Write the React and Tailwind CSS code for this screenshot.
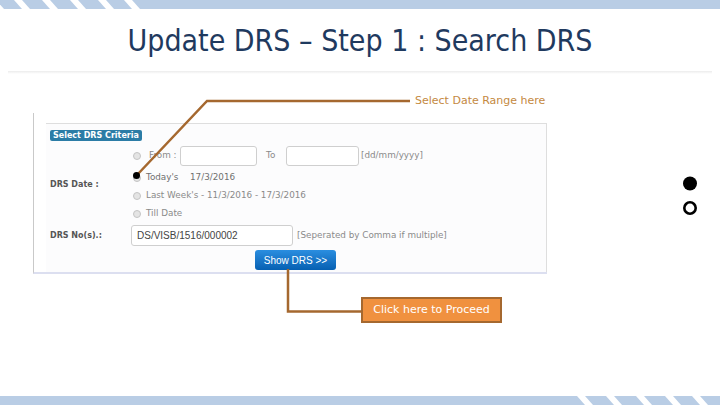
import React from "react";

const Stripes = ({ tops, fill }) => (
  <svg width="720" height="9" viewBox="0 0 720 9" className="block">
    <rect x="0" y="0" width="720" height="9" fill={fill} />
    {tops.map((x) => (
      <polygon key={x} points={`${x},0 ${x + 8},0 ${x + 16},9 ${x + 8},9`} fill="#ffffff" />
    ))}
  </svg>
);

const Radio = () => (
  <span className="inline-block w-[8px] h-[8px] rounded-full border border-[#c4c4c4] bg-[#e4e4e4] shrink-0" />
);

export default function App() {
  const small = { fontFamily: '"DejaVu Sans", Verdana, sans-serif' };
  return (
    <div className="relative w-[720px] h-[405px] bg-white overflow-hidden flex flex-col">
      <Stripes tops={[-12, 14, 42, 70, 98, 124]} fill="#b9cde5" />
      <div
        className="h-[62px] flex items-center justify-center text-[30px] text-[#1f3a5f]"
        style={{ fontFamily: '"DejaVu Sans Condensed", "DejaVu Sans", sans-serif', fontStretch: "condensed" }}
      >
        Update DRS – Step 1 : Search DRS
      </div>
      <div className="mx-[8px] h-[3px] bg-gradient-to-b from-[#ececec] to-white" />

      <div className="flex-1 flex flex-col">
        <div className="ml-[33px] mt-[39px] w-[514px] h-[161px] flex flex-col border-l border-l-[#c9c9c9] border-b-2 border-b-[#dcdff0]">
          <div className="ml-[12px] mt-[10px] flex-1 border-t border-r border-[#dedede] bg-[#fcfcfd] pl-[4px] pt-[6px] flex flex-col" style={small}>
            <div className="self-start h-[11px] px-[3px] rounded-[2px] bg-[#2b7ca6] text-white text-[8px] font-bold leading-[11px]">
              Select DRS Criteria
            </div>

            <div className="mt-[5px] flex">
              <div className="w-[83px] flex items-center text-[8px] font-bold text-[#555]">DRS Date :</div>
              <div className="flex flex-col text-[8.8px] text-[#8a8a8a]">
                <div className="h-[20px] flex items-center">
                  <Radio />
                  <span className="ml-[8px] w-[31px]">From :</span>
                  <span className="w-[77px] h-[20px] border border-[#cfcfcf] rounded-[3px] bg-white" />
                  <span className="ml-[9px] w-[20px]">To</span>
                  <span className="w-[73px] h-[20px] border border-[#cfcfcf] rounded-[3px] bg-white" />
                  <span className="ml-[2px]">[dd/mm/yyyy]</span>
                </div>
                <div className="mt-[3px] h-[18px] flex items-center text-[#707070]">
                  <Radio />
                  <span className="ml-[5px] w-[44px]">Today's</span>
                  <span>17/3/2016</span>
                </div>
                <div className="h-[18px] flex items-center">
                  <Radio />
                  <span className="ml-[5px]">Last Week's - 11/3/2016 - 17/3/2016</span>
                </div>
                <div className="h-[18px] flex items-center">
                  <Radio />
                  <span className="ml-[5px]">Till Date</span>
                </div>
              </div>
            </div>

            <div className="mt-[2px] flex items-center">
              <div className="w-[83px] text-[8px] font-bold text-[#555]">DRS No(s).:</div>
              <div
                className="ml-[-2px] w-[162px] h-[21px] border border-[#cfcfcf] rounded-[3px] bg-white pl-[5px] flex items-center text-[10px] text-[#444]"
                style={{ fontFamily: '"Liberation Sans", Arial, sans-serif' }}
              >
                DS/VISB/1516/000002
              </div>
              <span className="ml-[4px] text-[8.8px] text-[#8a8a8a]">[Seperated by Comma if multiple]</span>
            </div>

            <div className="mt-[4px] flex">
              <div
                className="ml-[205px] w-[81px] h-[20px] rounded-[3px] bg-gradient-to-b from-[#2a8ee0] to-[#0560b2] text-white text-[10px] flex items-center justify-center"
                style={{ fontFamily: '"Liberation Sans", Arial, sans-serif' }}
              >
                Show DRS &gt;&gt;
              </div>
            </div>
          </div>
        </div>
      </div>

      <Stripes tops={[577, 606, 636, 665, 692]} fill="#b9cde5" />

      {/* annotations */}
      <svg className="absolute left-0 top-0 pointer-events-none" width="720" height="405">
        <polyline points="137,175 207,101 410,101" fill="none" stroke="#a5682f" strokeWidth="2.5" />
        <circle cx="136.5" cy="175.5" r="3.5" fill="#000" />
        <polyline points="288,269 288,311.5 362,311.5" fill="none" stroke="#a5682f" strokeWidth="2.5" />
        <circle cx="690" cy="183.5" r="7" fill="#000" />
        <circle cx="690" cy="208" r="5.7" fill="none" stroke="#000" strokeWidth="2.6" />
      </svg>
      <div
        className="absolute left-[415px] top-[94px] text-[11px] text-[#c4893f] leading-[14px]"
        style={{ fontFamily: '"DejaVu Sans", Verdana, sans-serif' }}
      >
        Select Date Range here
      </div>
      <div
        className="absolute left-[361px] top-[297px] w-[141px] h-[26px] border-2 border-[#a5682f] bg-[#f0913f] text-white text-[11px] flex items-center justify-center"
        style={{ fontFamily: '"DejaVu Sans", Verdana, sans-serif' }}
      >
        Click here to Proceed
      </div>
    </div>
  );
}
